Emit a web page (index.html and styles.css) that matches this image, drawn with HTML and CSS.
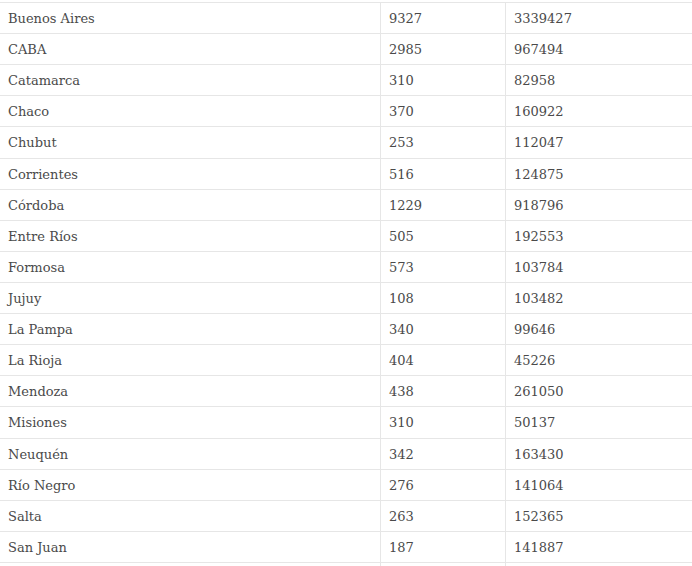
FILE: index.html
```html
<!DOCTYPE html>
<html lang="es">
<head>
<meta charset="utf-8">
<link rel="stylesheet" href="styles.css">
</head>
<body>
<table class="data">
<tbody>
<tr><td>Buenos Aires</td><td>9327</td><td>3339427</td></tr>
<tr><td>CABA</td><td>2985</td><td>967494</td></tr>
<tr><td>Catamarca</td><td>310</td><td>82958</td></tr>
<tr><td>Chaco</td><td>370</td><td>160922</td></tr>
<tr><td>Chubut</td><td>253</td><td>112047</td></tr>
<tr><td>Corrientes</td><td>516</td><td>124875</td></tr>
<tr><td>Córdoba</td><td>1229</td><td>918796</td></tr>
<tr><td>Entre Ríos</td><td>505</td><td>192553</td></tr>
<tr><td>Formosa</td><td>573</td><td>103784</td></tr>
<tr><td>Jujuy</td><td>108</td><td>103482</td></tr>
<tr><td>La Pampa</td><td>340</td><td>99646</td></tr>
<tr><td>La Rioja</td><td>404</td><td>45226</td></tr>
<tr><td>Mendoza</td><td>438</td><td>261050</td></tr>
<tr><td>Misiones</td><td>310</td><td>50137</td></tr>
<tr><td>Neuquén</td><td>342</td><td>163430</td></tr>
<tr><td>Río Negro</td><td>276</td><td>141064</td></tr>
<tr><td>Salta</td><td>263</td><td>152365</td></tr>
<tr><td>San Juan</td><td>187</td><td>141887</td></tr>
<tr class="tail"><td></td><td></td><td></td></tr>
</tbody>
</table>
</body>
</html>
```
FILE: styles.css
```css
html, body {
  margin: 0;
  padding: 0;
  background: #ffffff;
}
body {
  padding-top: 2px;
  overflow: hidden;
}
.data {
  border-collapse: collapse;
  width: 700px;
  font-family: "DejaVu Serif", "Liberation Serif", serif;
  font-size: 13px;
  color: #4a4a4a;
  table-layout: fixed;
}
.data td {
  border-top: 1px solid #e6e6e6;
  border-bottom: 1px solid #e6e6e6;
  padding: 5px 8px 3px 8px;
  height: 22.11px;
  line-height: 22.11px;
  white-space: nowrap;
  vertical-align: middle;
}
.data td + td {
  border-left: 1px solid #e6e6e6;
}
.data td:nth-child(1) { width: 364px; }
.data td:nth-child(2) { width: 108px; }
```
